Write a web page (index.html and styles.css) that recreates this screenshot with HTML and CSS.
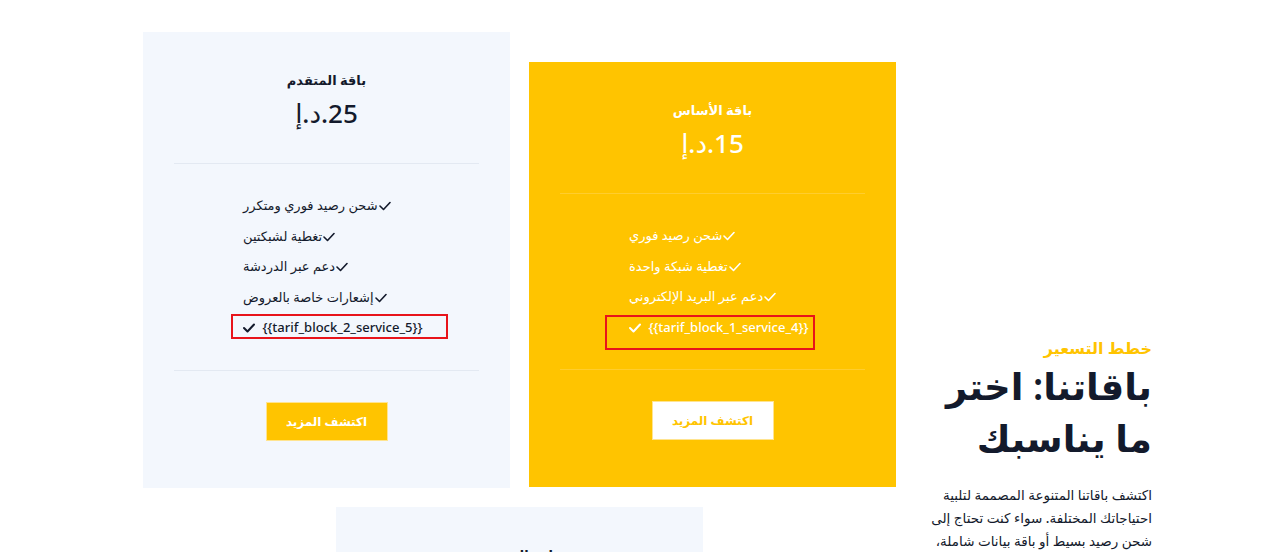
FILE: index.html
```html
<!DOCTYPE html>
<html lang="ar" dir="rtl">
<head>
<meta charset="utf-8">
<title>خطط التسعير</title>
<link rel="stylesheet" href="styles.css">
</head>
<body>
<section class="pricing">
  <div class="intro">
    <p class="intro__eyebrow">خطط التسعير</p>
    <h2 class="intro__title">باقاتنا: اختر<br>ما يناسبك</h2>
    <p class="intro__text">اكتشف باقاتنا المتنوعة المصممة لتلبية احتياجاتك المختلفة. سواء كنت تحتاج إلى شحن رصيد بسيط أو باقة بيانات شاملة، لدينا ما يناسبك.</p>
  </div>
  <div class="plans">
    <div class="plan plan--featured">
      <div class="plan__head">
        <h3 class="plan__name">باقة الأساس</h3>
        <p class="plan__price">15.د.إ</p>
      </div>
      <ul class="plan__list">
        <li class="plan__item"><span>شحن رصيد فوري</span><svg class="plan__tick" viewBox="0 0 12 10" width="12" height="10"><polyline points="1,5 4.5,8.5 11,1.5"/></svg></li>
        <li class="plan__item"><span>تغطية شبكة واحدة</span><svg class="plan__tick" viewBox="0 0 12 10" width="12" height="10"><polyline points="1,5 4.5,8.5 11,1.5"/></svg></li>
        <li class="plan__item"><span>دعم عبر البريد الإلكتروني</span><svg class="plan__tick" viewBox="0 0 12 10" width="12" height="10"><polyline points="1,5 4.5,8.5 11,1.5"/></svg></li>
        <li class="plan__item plan__item--flag"><svg class="plan__check" viewBox="0 0 12 10" width="12" height="10"><polyline points="1,5 4.5,8.5 11,1.5"/></svg> {{tarif_block_1_service_4}}<span class="flag flag--featured"></span></li>
      </ul>
      <div class="plan__foot"><a class="btn btn--light" href="#">اكتشف المزيد</a></div>
    </div>
    <div class="plan">
      <div class="plan__head">
        <h3 class="plan__name">باقة المتقدم</h3>
        <p class="plan__price">25.د.إ</p>
      </div>
      <ul class="plan__list">
        <li class="plan__item"><span>شحن رصيد فوري ومتكرر</span><svg class="plan__tick" viewBox="0 0 12 10" width="12" height="10"><polyline points="1,5 4.5,8.5 11,1.5"/></svg></li>
        <li class="plan__item"><span>تغطية لشبكتين</span><svg class="plan__tick" viewBox="0 0 12 10" width="12" height="10"><polyline points="1,5 4.5,8.5 11,1.5"/></svg></li>
        <li class="plan__item"><span>دعم عبر الدردشة</span><svg class="plan__tick" viewBox="0 0 12 10" width="12" height="10"><polyline points="1,5 4.5,8.5 11,1.5"/></svg></li>
        <li class="plan__item"><span>إشعارات خاصة بالعروض</span><svg class="plan__tick" viewBox="0 0 12 10" width="12" height="10"><polyline points="1,5 4.5,8.5 11,1.5"/></svg></li>
        <li class="plan__item plan__item--flag"><svg class="plan__check" viewBox="0 0 12 10" width="12" height="10"><polyline points="1,5 4.5,8.5 11,1.5"/></svg> {{tarif_block_2_service_5}}<span class="flag"></span></li>
      </ul>
      <div class="plan__foot"><a class="btn" href="#">اكتشف المزيد</a></div>
    </div>
    <div class="plan">
      <div class="plan__head">
        <h3 class="plan__name">باقة المميزة</h3>
        <p class="plan__price">35.د.إ</p>
      </div>
      <ul class="plan__list">
        <li class="plan__item"><span>شحن رصيد غير محدود</span><svg class="plan__tick" viewBox="0 0 12 10" width="12" height="10"><polyline points="1,5 4.5,8.5 11,1.5"/></svg></li>
        <li class="plan__item"><span>تغطية جميع الشبكات</span><svg class="plan__tick" viewBox="0 0 12 10" width="12" height="10"><polyline points="1,5 4.5,8.5 11,1.5"/></svg></li>
        <li class="plan__item"><span>دعم على مدار الساعة</span><svg class="plan__tick" viewBox="0 0 12 10" width="12" height="10"><polyline points="1,5 4.5,8.5 11,1.5"/></svg></li>
      </ul>
      <div class="plan__foot"><a class="btn" href="#">اكتشف المزيد</a></div>
    </div>
  </div>
</section>
</body>
</html>
```

FILE: styles.css
```css
* { box-sizing: border-box; }

html, body {
  margin: 0;
  padding: 0;
  background: #ffffff;
}

body {
  font-family: "Noto Sans", "DejaVu Sans", sans-serif;
  color: #131a2c;
}

.pricing {
  display: flex;
  align-items: flex-start;
  gap: 19px;
  padding: 32px 127px 0 143px;
}

.intro {
  width: 237px;
  flex: 0 0 237px;
  margin-top: 304px;
  text-align: right;
}

.intro__eyebrow {
  margin: 0;
  color: #ffc400;
  font-size: 16px;
  line-height: 24px;
  font-weight: 600;
}

.intro__title {
  margin: 0;
  font-size: 37px;
  line-height: 52px;
  font-weight: 600;
  white-space: nowrap;
  color: #131a2c;
}

.intro__text {
  margin: 20px 0 0;
  font-size: 13.5px;
  line-height: 23px;
  font-weight: 500;
  color: #131a2c;
}

.plans {
  width: 753px;
  flex: 0 0 753px;
  display: flex;
  flex-wrap: wrap;
  justify-content: center;
  align-items: flex-start;
  gap: 19px;
}

.plan {
  width: 367px;
  background: #f3f7fd;
  padding: 38px 31px 47px;
  display: flex;
  flex-direction: column;
}

.plan--featured {
  background: #ffc400;
  color: #ffffff;
  margin-top: 30px;
}

.plan__head {
  text-align: center;
  padding-bottom: 33px;
  border-bottom: 1px solid #e3e9f2;
}

.plan--featured .plan__head,
.plan--featured .plan__list {
  border-color: #ffcd2e;
}

.plan__name {
  margin: 0;
  font-size: 13px;
  line-height: 20px;
  font-weight: 600;
}

.plan__price {
  margin: 6px 0 0;
  font-size: 26px;
  line-height: 34px;
  font-weight: 500;
  direction: rtl;
}

.plan__list {
  list-style: none;
  margin: 0;
  padding: 26px 0 27px 69px;
  border-bottom: 1px solid #e3e9f2;
}

.plan__item {
  position: relative;
  direction: ltr;
  text-align: left;
  font-size: 13px;
  line-height: 20.5px;
  padding: 5px 0;
  font-weight: 500;
  white-space: nowrap;
}

.plan__check,
.plan__tick {
  display: inline-block;
  vertical-align: -1px;
  fill: none;
  stroke: currentColor;
  stroke-width: 2;
  stroke-linecap: round;
  stroke-linejoin: round;
}

.plan__check {
  margin-right: 4px;
}

.plan__tick {
  stroke-width: 1.6;
  margin-left: 1px;
}

.flag {
  position: absolute;
  left: -12px;
  top: 2px;
  width: 217px;
  height: 25px;
  border: 2px solid #e8141b;
}

.flag--featured {
  left: -24px;
  top: 3px;
  width: 210px;
  height: 35px;
}

.plan__foot {
  display: flex;
  justify-content: center;
  padding-top: 31px;
}

.btn {
  display: inline-flex;
  align-items: center;
  justify-content: center;
  width: 122px;
  height: 39px;
  background: #ffc400;
  color: #ffffff;
  border: 1px solid #ffe48f;
  font-size: 12px;
  font-weight: 700;
  text-decoration: none;
}

.btn--light {
  background: #ffffff;
  color: #ffc400;
  border-color: #ffe48f;
}
```
